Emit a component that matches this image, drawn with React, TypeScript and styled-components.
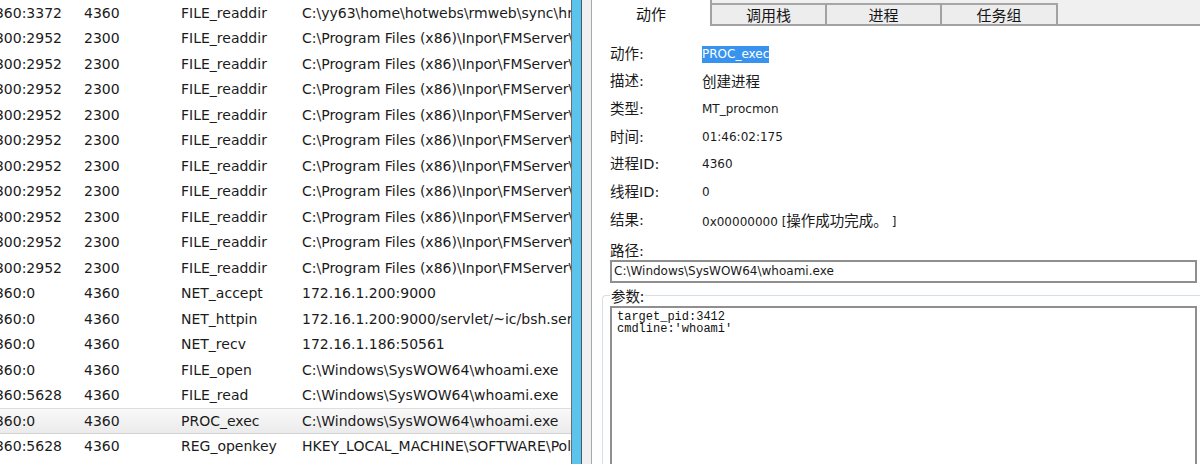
import React from "react";
import styled, { createGlobalStyle, css } from "styled-components";

const Global = createGlobalStyle`
  html, body { margin: 0; padding: 0; background: #fff; }
  body { font-family: "DejaVu Sans", "Noto Sans CJK SC", sans-serif; }
`;

const Screen = styled.div`
  display: flex;
  width: 1200px;
  height: 464px;
  overflow: hidden;
  background: #fff;
`;

const ListPane = styled.div`
  width: 571px;
  flex: none;
  overflow: hidden;
  border-right: 1px solid #6e6e6e;
  background: #fff;
`;

/* list is scrolled a little to the right */
const ListInner = styled.div`
  margin-left: -14px;
  width: 800px;
`;

const Row = styled.div<{ $selected?: boolean }>`
  display: grid;
  grid-template-columns: 98px 97px 121px max-content;
  height: 25.5px;
  align-items: center;
  box-sizing: border-box;
  font: 14px "DejaVu Sans", sans-serif;
  color: #1b1b1b;
  white-space: nowrap;
  ${(p) =>
    p.$selected &&
    css`
      background: linear-gradient(#f9f9f9, #ebebeb);
      border-top: 1px solid #dedede;
      border-bottom: 1px solid #d2d2d2;
    `}
`;

const Cell = styled.span`
  overflow: hidden;
`;

const Splitter = styled.div`
  width: 9px;
  flex: none;
  background: #5cc3ec;
  border-right: 1px solid #4d5863;
`;

const DetailPane = styled.div`
  flex: 1;
  min-width: 0;
  display: flex;
  flex-direction: column;
  background: #f0f0f0;
  padding-left: 9px;
`;

const TabStrip = styled.div`
  display: flex;
  align-items: flex-end;
  height: 26px;
  flex: none;
`;

const Tab = styled.div<{ $active?: boolean; $w: number }>`
  box-sizing: border-box;
  width: ${(p) => p.$w}px;
  display: flex;
  align-items: center;
  justify-content: center;
  font: 15px "Noto Sans CJK SC", sans-serif;
  color: #151515;
  border-right: 2px solid #a2a2a2;
  ${(p) =>
    p.$active
      ? css`
          height: 26px;
          background: #fff;
          border-left: 1px solid #a8a8a8;
        `
      : css`
          height: 23px;
          background: #ededed;
          border-top: 2px solid #a6a6a6;
          border-bottom: 2px solid #a2a2a2;
        `}
`;

const TabFiller = styled.div`
  flex: 1;
  height: 26px;
  box-sizing: border-box;
  border-bottom: 2px solid #a2a2a2;
`;

const TabPage = styled.div`
  flex: 1;
  display: flex;
  flex-direction: column;
  background: #fff;
  border-left: 1px solid #a8a8a8;
  padding: 14px 3px 0 18px;
  min-height: 0;
  & > * {
    flex-shrink: 0;
  }
`;

const FieldGrid = styled.div`
  display: grid;
  grid-template-columns: 92px 1fr;
  grid-auto-rows: 27.67px;
  align-items: center;
`;

const Label = styled.div`
  font: 14.5px/18px "DejaVu Sans", "Noto Sans CJK SC", sans-serif;
  color: #1a1a1a;
  white-space: nowrap;
`;

const Value = styled.div`
  font: 12px/18px "DejaVu Sans", "Noto Sans CJK SC", sans-serif;
  color: #1a1a1a;
  white-space: nowrap;
`;

const Cjk = styled.span`
  font: 14.5px "Noto Sans CJK SC", sans-serif;
`;

const Selected = styled.span`
  background: #3893ee;
  color: #fff;
  padding: 1px 0 2px;
`;

const PathLabel = styled(Label)`
  margin-top: 8px;
`;

const PathBox = styled.div`
  height: 23px;
  box-sizing: border-box;
  border: 2px solid #8f8f8f;
  display: flex;
  align-items: center;
  padding-left: 2px;
  font: 12px "DejaVu Sans", sans-serif;
  color: #1a1a1a;
  background: #fff;
`;

const GroupBox = styled.fieldset`
  margin: 4px -10px 0 -8px;
  padding: 1px 9px 0 7px;
  border: 1px solid #d5dfe6;
  border-bottom: none;
  border-radius: 4px 4px 0 0;
  min-width: 0;
`;

const Legend = styled.legend`
  padding: 0 1px;
  font: 14.5px/18px "Noto Sans CJK SC", "DejaVu Sans", sans-serif;
  color: #1a1a1a;
`;

const ParamBox = styled.div`
  height: 170px;
  box-sizing: border-box;
  border: 2px solid #8f8f8f;
  padding: 3px 5px;
  font: 12px/12.5px "Liberation Mono", monospace;
  color: #111;
  white-space: pre;
  background: #fff;
`;

type Ev = [string, string, string, string];

const PF = "C:\\Program Files (x86)\\Inpor\\FMServer\\webapps";
const WH = "C:\\Windows\\SysWOW64\\whoami.exe";

const rows: Ev[] = [
  ["4360:3372", "4360", "FILE_readdir", "C:\\yy63\\home\\hotwebs\\rmweb\\sync\\hrpub"],
  ...Array.from({ length: 10 }, (): Ev => ["2300:2952", "2300", "FILE_readdir", PF]),
  ["4360:0", "4360", "NET_accept", "172.16.1.200:9000"],
  ["4360:0", "4360", "NET_httpin", "172.16.1.200:9000/servlet/~ic/bsh.servlet.BshServlet"],
  ["4360:0", "4360", "NET_recv", "172.16.1.186:50561"],
  ["4360:0", "4360", "FILE_open", WH],
  ["4360:5628", "4360", "FILE_read", WH],
  ["4360:0", "4360", "PROC_exec", WH],
  ["4360:5628", "4360", "REG_openkey", "HKEY_LOCAL_MACHINE\\SOFTWARE\\Policies"],
];

const SELECTED = 16;

const tabs = [
  { name: "动作", w: 121 },
  { name: "调用栈", w: 115 },
  { name: "进程", w: 115 },
  { name: "任务组", w: 116 },
];

export default function App() {
  return (
    <>
      <Global />
      <Screen>
        <ListPane>
          <ListInner>
            {rows.map((r, i) => (
              <Row key={i} $selected={i === SELECTED}>
                {r.map((c, j) => (
                  <Cell key={j}>{c}</Cell>
                ))}
              </Row>
            ))}
          </ListInner>
        </ListPane>
        <Splitter />
        <DetailPane>
          <TabStrip>
            {tabs.map((t, i) => (
              <Tab key={t.name} $active={i === 0} $w={t.w}>
                {t.name}
              </Tab>
            ))}
            <TabFiller />
          </TabStrip>
          <TabPage>
            <FieldGrid>
              <Label>动作:</Label>
              <Value>
                <Selected>PROC_exec</Selected>
              </Value>
              <Label>描述:</Label>
              <Value>
                <Cjk>创建进程</Cjk>
              </Value>
              <Label>类型:</Label>
              <Value>MT_procmon</Value>
              <Label>时间:</Label>
              <Value>01:46:02:175</Value>
              <Label>进程ID:</Label>
              <Value>4360</Value>
              <Label>线程ID:</Label>
              <Value>0</Value>
              <Label>结果:</Label>
              <Value>
                0x00000000 [<Cjk>操作成功完成。</Cjk> ]
              </Value>
            </FieldGrid>
            <PathLabel>路径:</PathLabel>
            <PathBox>{WH}</PathBox>
            <GroupBox>
              <Legend>参数:</Legend>
              <ParamBox>{"target_pid:3412\ncmdline:'whoami'"}</ParamBox>
            </GroupBox>
          </TabPage>
        </DetailPane>
      </Screen>
    </>
  );
}
